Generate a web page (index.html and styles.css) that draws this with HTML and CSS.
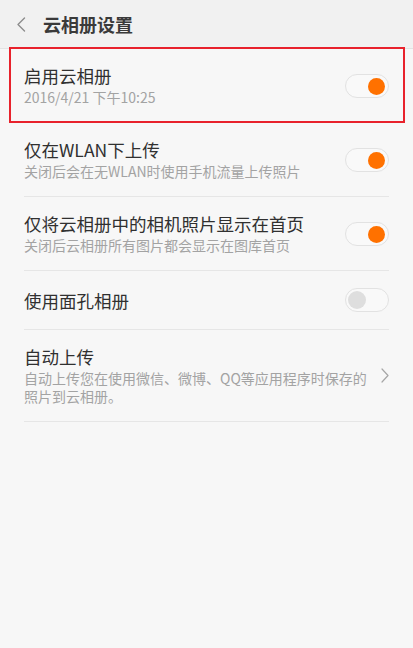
FILE: index.html
```html
<!DOCTYPE html>
<html lang="zh-CN">
<head>
<meta charset="utf-8">
<title>云相册设置</title>
<link rel="stylesheet" href="styles.css">
</head>
<body>
<div class="page">
  <header class="header">
    <svg class="back" width="10" height="15" viewBox="0 0 10 15" aria-hidden="true">
      <polyline points="8.5,1 2,7.5 8.5,14" fill="none" stroke="#8c8c8c" stroke-width="1.4" stroke-linecap="round" stroke-linejoin="round"/>
    </svg>
    <h1 class="title">云相册设置</h1>
  </header>

  <div class="list">
    <div class="row two">
      <div class="text">
        <div class="label">启用云相册</div>
        <div class="sub">2016/4/21 下午10:25</div>
      </div>
      <span class="switch on"><span class="knob"></span></span>
    </div>
    <div class="row two">
      <div class="text">
        <div class="label">仅在WLAN下上传</div>
        <div class="sub">关闭后会在无WLAN时使用手机流量上传照片</div>
      </div>
      <span class="switch on"><span class="knob"></span></span>
    </div>
    <div class="row two">
      <div class="text">
        <div class="label">仅将云相册中的相机照片显示在首页</div>
        <div class="sub">关闭后云相册所有图片都会显示在图库首页</div>
      </div>
      <span class="switch on"><span class="knob"></span></span>
    </div>
    <div class="row one">
      <div class="text">
        <div class="label">使用面孔相册</div>
      </div>
      <span class="switch"><span class="knob"></span></span>
    </div>
    <div class="row three">
      <div class="text narrow">
        <div class="label">自动上传</div>
        <div class="sub">自动上传您在使用微信、微博、QQ等应用程序时保存的照片到云相册。</div>
      </div>
      <svg class="chev" width="8" height="15" viewBox="0 0 8 15" aria-hidden="true">
        <polyline points="1,1 7,7.5 1,14" fill="none" stroke="#a6a6a6" stroke-width="1.2" stroke-linecap="round" stroke-linejoin="round"/>
      </svg>
    </div>
  </div>

  <div class="highlight"></div>
</div>
</body>
</html>
```

FILE: styles.css
```css
html, body {
  margin: 0;
  padding: 0;
}
body {
  background: #f7f7f7;
  font-family: "Noto Sans CJK SC", "Noto Sans", sans-serif;
  color: #333;
  width: 413px;
  height: 648px;
  overflow: hidden;
}
.page {
  position: relative;
  min-height: 648px;
}
.header {
  height: 48px;
  background: #f1f1f1;
  border-bottom: 1px solid #e3e3e3;
  display: flex;
  align-items: center;
  padding-left: 16px;
  box-sizing: content-box;
}
.back {
  display: block;
  margin-top: 1px;
}
.title {
  margin: 0 0 0 17px;
  font-size: 18px;
  font-weight: bold;
  color: #3a3a3a;
  line-height: 24px;
}
.list {
  padding: 0 24px;
}
.row {
  display: flex;
  align-items: center;
  justify-content: space-between;
  border-bottom: 1px solid #e6e6e6;
  box-sizing: border-box;
}
.row.two {
  padding: 17px 0 16px;
  min-height: 74px;
}
.row.one {
  padding: 17px 0 17px;
  min-height: 59px;
}
.row.three {
  padding: 16px 0 16px;
  min-height: 92px;
}
.text {
  flex: 1;
  min-width: 0;
}
.row.one .text {
  padding-top: 2px;
}
.text.narrow {
  max-width: 348px;
}
.label {
  font-size: 17.5px;
  line-height: 20px;
  color: #303030;
}
.sub {
  margin-top: 2px;
  font-size: 14px;
  line-height: 18px;
  color: #a3a3a3;
}
.switch {
  flex: none;
  width: 44px;
  height: 24px;
  box-sizing: border-box;
  border: 1px solid #e2e2e2;
  border-radius: 12px;
  background: #f9f9f9;
  display: flex;
  align-items: center;
  padding: 0 2px;
}
.switch .knob {
  width: 18px;
  height: 18px;
  border-radius: 50%;
  background: #dedede;
}
.switch.on {
  justify-content: flex-end;
  padding: 0 3px;
}
.switch.on .knob {
  width: 17px;
  height: 17px;
  background: #ff7100;
}
.chev {
  flex: none;
  display: block;
}
.highlight {
  position: absolute;
  left: 9px;
  top: 47px;
  width: 396px;
  height: 76px;
  border: 2px solid #e8222c;
  box-sizing: border-box;
  pointer-events: none;
}
```
